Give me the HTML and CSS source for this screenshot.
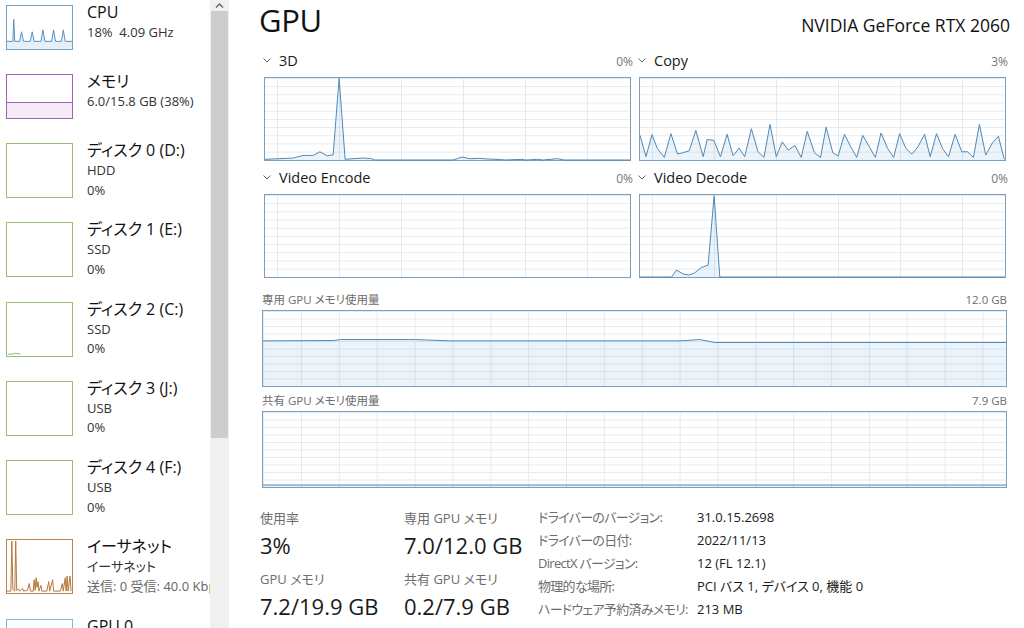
FILE: index.html
```html
<!DOCTYPE html>
<html lang="ja">
<head>
<meta charset="utf-8">
<title>GPU</title>
<link rel="stylesheet" href="styles.css">
</head>
<body>
<div class="app">
  <aside class="sidebar">
    <div class="list">
      <div class="item">
        <div class="thumb thumb-cpu">
          <svg viewBox="0 0 67 45" preserveAspectRatio="none">
            <polygon class="cpu-area" points="0,37 6,37 7,14 8,37 13,37 15,27 17,37 24,37 26,27 28,37 35,37 37,25 39,37 46,37 48,25 50,37 56,37 58,25 60,37 67,37 67,45 0,45"/>
            <polyline class="cpu-line" points="0,37 6,37 7,14 8,37 13,37 15,27 17,37 24,37 26,27 28,37 35,37 37,25 39,37 46,37 48,25 50,37 56,37 58,25 60,37 67,37"/>
          </svg>
        </div>
        <div class="info">
          <div class="name">CPU</div>
          <div class="sub">18%&nbsp;&nbsp;4.09 GHz</div>
        </div>
      </div>
      <div class="item">
        <div class="thumb thumb-mem"><div class="mem-fill"></div></div>
        <div class="info">
          <div class="name">メモリ</div>
          <div class="sub">6.0/15.8 GB (38%)</div>
        </div>
      </div>
      <div class="item tall">
        <div class="thumb thumb-disk"></div>
        <div class="info">
          <div class="name">ディスク 0 (D:)</div>
          <div class="sub">HDD</div>
          <div class="sub">0%</div>
        </div>
      </div>
      <div class="item tall">
        <div class="thumb thumb-disk"></div>
        <div class="info">
          <div class="name">ディスク 1 (E:)</div>
          <div class="sub">SSD</div>
          <div class="sub">0%</div>
        </div>
      </div>
      <div class="item tall">
        <div class="thumb thumb-disk">
          <svg viewBox="0 0 67 56" preserveAspectRatio="none"><polyline class="disk-line" points="1,54 6,54 9,53 14,54"/></svg>
        </div>
        <div class="info">
          <div class="name">ディスク 2 (C:)</div>
          <div class="sub">SSD</div>
          <div class="sub">0%</div>
        </div>
      </div>
      <div class="item tall">
        <div class="thumb thumb-disk"></div>
        <div class="info">
          <div class="name">ディスク 3 (J:)</div>
          <div class="sub">USB</div>
          <div class="sub">0%</div>
        </div>
      </div>
      <div class="item tall">
        <div class="thumb thumb-disk"></div>
        <div class="info">
          <div class="name">ディスク 4 (F:)</div>
          <div class="sub">USB</div>
          <div class="sub">0%</div>
        </div>
      </div>
      <div class="item tall">
        <div class="thumb thumb-eth">
          <svg viewBox="0 0 67 56" preserveAspectRatio="none">
            <polyline class="eth-line" points="0,54 4,54 5,1 6,52 8,54 9,1 10,53 12,52 13,54 16,51 17,54 21,53 23,46 24,54 27,54 28,42 29,53 30,40 31,50 32,44 33,54 35,48 36,54 41,54 43,44 44,54 47,42 48,54 55,54 57,46 58,54 60,40 61,54 62,38 63,54 65,38 66,54"/>
          </svg>
        </div>
        <div class="info">
          <div class="name">イーサネット</div>
          <div class="sub">イーサネット</div>
          <div class="sub muted">送信: 0 受信: 40.0 Kbps</div>
        </div>
      </div>
      <div class="item tall">
        <div class="thumb thumb-gpu"></div>
        <div class="info">
          <div class="name">GPU 0</div>
          <div class="sub">NVIDIA GeForce RTX 2060</div>
          <div class="sub">3%</div>
        </div>
      </div>
    </div>
    <div class="scrollbar">
      <div class="sb-arrow">
        <svg viewBox="0 0 19 11"><polyline points="6,7.5 9.5,4 13,7.5"/></svg>
      </div>
      <div class="sb-thumb"></div>
    </div>
  </aside>

  <main class="main">
    <header class="head">
      <h1 class="title">GPU</h1>
      <div class="gpu-name">NVIDIA GeForce RTX 2060</div>
    </header>

    <section class="engines">
      <div class="engine">
        <div class="eng-head">
          <span class="eng-title"><svg class="chev" viewBox="0 0 8 5"><polyline points="0.5,0.5 4,4 7.5,0.5"/></svg>3D</span>
          <span class="eng-val">0%</span>
        </div>
        <div class="graph eng-graph">
          <svg viewBox="75 231 1098 249" preserveAspectRatio="none">
            <polygon class="area" points="75,478 140,475 160,474 190,466 220,466 240,455 262,467 280,464 298,232 316,478 340,476 370,474 395,476 405,480 640,480 650,477 668,471 690,476 720,475 745,477 770,478 800,480 845,478 860,480 895,478 910,480 955,476 975,480 1173,480 75,480"/>
            <polyline class="line" points="75,478 140,475 160,474 190,466 220,466 240,455 262,467 280,464 298,232 316,478 340,476 370,474 395,476 405,480 640,480 650,477 668,471 690,476 720,475 745,477 770,478 800,480 845,478 860,480 895,478 910,480 955,476 975,480 1173,480"/>
          </svg>
        </div>
      </div>
      <div class="engine">
        <div class="eng-head">
          <span class="eng-title"><svg class="chev" viewBox="0 0 8 5"><polyline points="0.5,0.5 4,4 7.5,0.5"/></svg>Copy</span>
          <span class="eng-val">3%</span>
        </div>
        <div class="graph eng-graph">
          <svg viewBox="30 231 1098 249" preserveAspectRatio="none">
            <polygon class="area" points="30,405 48,470 66,403 82,445 103,472 123,400 143,462 158,458 178,452 198,390 220,470 232,418 252,420 272,470 292,402 310,467 328,444 345,470 365,385 385,455 403,472 421,372 440,470 458,425 476,450 496,436 515,472 533,393 555,458 573,472 590,380 610,458 626,468 645,402 664,440 682,472 700,405 720,440 738,472 755,398 775,445 793,472 811,400 830,445 848,462 866,440 886,402 903,470 922,400 940,445 958,470 978,402 998,455 1015,455 1033,472 1051,372 1070,465 1090,428 1108,408 1126,478 1128,480 30,480"/>
            <polyline class="line" points="30,405 48,470 66,403 82,445 103,472 123,400 143,462 158,458 178,452 198,390 220,470 232,418 252,420 272,470 292,402 310,467 328,444 345,470 365,385 385,455 403,472 421,372 440,470 458,425 476,450 496,436 515,472 533,393 555,458 573,472 590,380 610,458 626,468 645,402 664,440 682,472 700,405 720,440 738,472 755,398 775,445 793,472 811,400 830,445 848,462 866,440 886,402 903,470 922,400 940,445 958,470 978,402 998,455 1015,455 1033,472 1051,372 1070,465 1090,428 1108,408 1126,478"/>
          </svg>
        </div>
      </div>
      <div class="engine">
        <div class="eng-head">
          <span class="eng-title"><svg class="chev" viewBox="0 0 8 5"><polyline points="0.5,0.5 4,4 7.5,0.5"/></svg>Video Encode</span>
          <span class="eng-val">0%</span>
        </div>
        <div class="graph eng-graph"></div>
      </div>
      <div class="engine">
        <div class="eng-head">
          <span class="eng-title"><svg class="chev" viewBox="0 0 8 5"><polyline points="0.5,0.5 4,4 7.5,0.5"/></svg>Video Decode</span>
          <span class="eng-val">0%</span>
        </div>
        <div class="graph eng-graph">
          <svg viewBox="30 102 1098 249" preserveAspectRatio="none">
            <polygon class="area" points="30,351 125,351 140,330 160,342 178,345 195,338 215,322 235,315 253,104 270,351 1128,351"/>
            <polyline class="line" points="30,351 125,351 140,330 160,342 178,345 195,338 215,322 235,315 253,104 270,351 1128,351"/>
          </svg>
        </div>
      </div>
    </section>

    <section class="mem">
      <div class="mem-head"><span>専用 GPU メモリ使用量</span><span>12.0 GB</span></div>
      <div class="graph mem-graph">
        <svg viewBox="44 60 1490 231" preserveAspectRatio="none">
          <polygon class="area" points="44,152 185,151 200,148 350,148 420,152 880,152 920,148 950,157 1534,157 1534,291 44,291"/>
          <polyline class="line" points="44,152 185,151 200,148 350,148 420,152 880,152 920,148 950,157 1534,157"/>
        </svg>
      </div>
      <div class="mem-head second"><span>共有 GPU メモリ使用量</span><span>7.9 GB</span></div>
      <div class="graph mem-graph">
        <svg viewBox="0 0 745 77" preserveAspectRatio="none">
          <polygon class="area" points="0,75 745,75 745,77 0,77"/>
          <polyline class="line" points="0,75 745,75"/>
        </svg>
      </div>
    </section>

    <section class="stats">
      <div class="stat-col c1">
        <div class="stat">
          <div class="stat-label">使用率</div>
          <div class="stat-value">3%</div>
        </div>
        <div class="stat">
          <div class="stat-label">GPU メモリ</div>
          <div class="stat-value">7.2/19.9 GB</div>
        </div>
      </div>
      <div class="stat-col c2">
        <div class="stat">
          <div class="stat-label">専用 GPU メモリ</div>
          <div class="stat-value">7.0/12.0 GB</div>
        </div>
        <div class="stat">
          <div class="stat-label">共有 GPU メモリ</div>
          <div class="stat-value">0.2/7.9 GB</div>
        </div>
      </div>
      <dl class="props">
        <dt>ドライバーのバージョン:</dt><dd>31.0.15.2698</dd>
        <dt>ドライバーの日付:</dt><dd>2022/11/13</dd>
        <dt>DirectX バージョン:</dt><dd>12 (FL 12.1)</dd>
        <dt>物理的な場所:</dt><dd>PCI バス 1, デバイス 0, 機能 0</dd>
        <dt>ハードウェア予約済みメモリ:</dt><dd>213 MB</dd>
      </dl>
    </section>
  </main>
</div>
</body>
</html>
```

FILE: styles.css
```css
* { box-sizing: border-box; }

html, body {
  margin: 0;
  padding: 0;
  background: #ffffff;
}

body {
  width: 1024px;
  height: 628px;
  overflow: hidden;
  font-family: "Open Sans", "Noto Sans CJK JP", sans-serif;
  font-feature-settings: "palt";
  color: #1a1a1a;
}

.app {
  display: flex;
  height: 628px;
}

/* ---------- sidebar ---------- */
.sidebar {
  display: flex;
  width: 229px;
  flex: none;
  height: 628px;
}

.list {
  width: 210px;
  overflow: hidden;
  padding-top: 5px;
}

.item {
  display: flex;
  align-items: flex-start;
  height: 45px;
  margin-bottom: 24px;
}

.item.tall {
  height: 55px;
  margin-bottom: 24.3px;
}

.thumb {
  flex: none;
  width: 67px;
  height: 100%;
  margin-left: 6px;
  border: 1px solid #64a0c8;
  position: relative;
  overflow: hidden;
}

.thumb svg {
  display: block;
  width: 100%;
  height: 100%;
}

.thumb-cpu { border-color: #6ea3c9; }
.cpu-area { fill: #e4eff8; stroke: none; }
.cpu-line { fill: none; stroke: #5b93bf; stroke-width: 1; vector-effect: non-scaling-stroke; }

.thumb-mem {
  border-color: #9d64b9;
  display: flex;
  flex-direction: column;
  justify-content: flex-end;
}
.mem-fill {
  height: 16px;
  background: #f4ebf7;
  border-top: 1px solid #9d64b9;
}

.thumb-disk { border-color: #98bd78; }
.disk-line { fill: none; stroke: #8fb86a; stroke-width: 1; vector-effect: non-scaling-stroke; }

.thumb-eth { border-color: #bb8352; }
.eth-line { fill: none; stroke: #b7773d; stroke-width: 1; vector-effect: non-scaling-stroke; }

.thumb-gpu { border-color: #8ab6d4; }

.info {
  margin-left: 14px;
  margin-top: -3px;
  white-space: nowrap;
}

.name {
  font-size: 16px;
  line-height: 21px;
  color: #111;
}

.sub {
  font-size: 13px;
  line-height: 19.5px;
  color: #333;
}

.sub.muted { color: #666; }

.scrollbar {
  width: 19px;
  flex: none;
  background: #f0f0f0;
  display: flex;
  flex-direction: column;
}

.sb-arrow {
  height: 11px;
}
.sb-arrow svg {
  display: block;
  width: 19px;
  height: 11px;
}
.sb-arrow polyline {
  fill: none;
  stroke: #606060;
  stroke-width: 1.3;
}

.sb-thumb {
  height: 427px;
  margin: 0 1px 0 1px;
  background: #cdcdcd;
}

/* ---------- main ---------- */
.main {
  flex: 1;
  padding: 0 17px 0 30px;
}

.head {
  display: flex;
  justify-content: space-between;
  align-items: baseline;
  height: 40px;
  margin-bottom: 11px;
  margin-right: -3px;
}

.title {
  margin: 0;
  font-size: 31px;
  line-height: 40px;
  font-weight: 400;
  letter-spacing: -0.3px;
  color: #111;
}

.gpu-name {
  font-size: 17.5px;
  line-height: 40px;
  color: #111;
}

.engines {
  display: grid;
  grid-template-columns: 367px 367px;
  column-gap: 8px;
  row-gap: 7px;
  margin-left: 5px;
}

.eng-head {
  display: flex;
  justify-content: space-between;
  align-items: center;
  height: 20px;
  margin: 0 -2px 6px -1px;
}

.eng-title {
  display: flex;
  align-items: center;
  font-size: 14.5px;
  line-height: 20px;
  color: #1a1a1a;
}

.chev {
  width: 8px;
  height: 5px;
  margin-right: 8px;
  margin-top: -1px;
}
.chev polyline {
  fill: none;
  stroke: #666;
  stroke-width: 1;
}

.eng-val {
  font-size: 12px;
  color: #777;
}

.graph {
  border: 1px solid #7d9fbc;
  background-color: #fff;
  background-image:
    linear-gradient(to bottom, #e3ebf2 1px, transparent 1px),
    linear-gradient(to right, #e3ebf2 1px, transparent 1px);
}

.graph svg {
  display: block;
  width: 100%;
  height: 100%;
  overflow: visible;
}

.eng-graph {
  height: 84px;
  background-size: 100% 8.2px, 62px 100%;
  background-position: 0 0, 12px 0;
}

.area {
  fill: rgba(40, 130, 200, 0.09);
  stroke: none;
}

.line {
  fill: none;
  stroke: #5088b6;
  stroke-width: 1;
  vector-effect: non-scaling-stroke;
}

.mem {
  margin-top: 14px;
  margin-left: 3px;
}

.mem-head {
  display: flex;
  justify-content: space-between;
  height: 16px;
  margin-bottom: 2px;
  font-size: 11.5px;
  line-height: 16px;
  color: #6d6d6d;
}

.mem-head.second {
  margin-top: 6px;
}

.mem-graph {
  height: 77px;
  background-size: 100% 7.5px, 37.86px 100%;
  background-position: 0 0, 38px 0;
}

/* ---------- stats ---------- */
.stats {
  display: flex;
  margin-top: 21px;
  margin-left: 1px;
}

.stat-col {
  display: flex;
  flex-direction: column;
  gap: 10px;
}

.stat-col.c1 { width: 144px; }
.stat-col.c2 { width: 134px; }

.stat-label {
  font-size: 13px;
  line-height: 18px;
  color: #6d6d6d;
}

.stat-value {
  margin-top: 3px;
  font-size: 22px;
  line-height: 30px;
  color: #1a1a1a;
}

.props {
  display: grid;
  grid-template-columns: 159px auto;
  margin: -3px 0 0 0;
  font-size: 13px;
  line-height: 22.25px;
  white-space: nowrap;
}

.props dt {
  color: #6d6d6d;
  letter-spacing: -0.7px;
}

.props dd {
  margin: 0;
  color: #1a1a1a;
}
```
